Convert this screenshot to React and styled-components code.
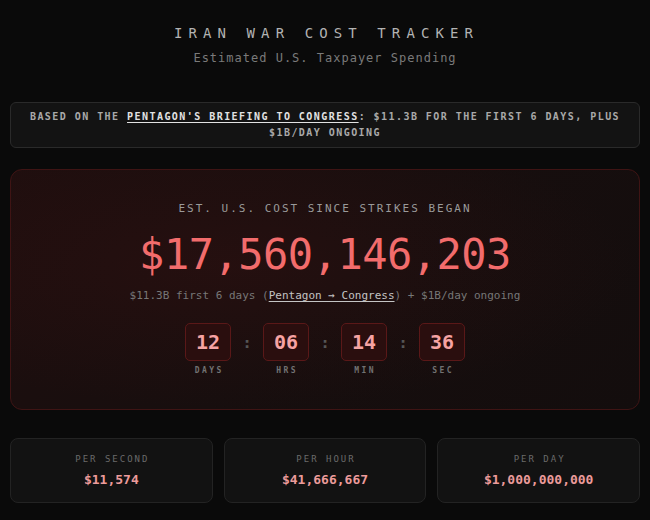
import React from 'react'
import styled, { createGlobalStyle } from 'styled-components'

const GlobalStyle = createGlobalStyle`
  html, body {
    margin: 0;
    padding: 0;
    background: #0a0a0a;
  }
  body {
    font-family: "DejaVu Sans Mono", "Liberation Mono", monospace;
    color: #bbb;
  }
  * { box-sizing: border-box; }
`

const Page = styled.div`
  padding: 24px 10px 18px;
`

const Header = styled.header`
  text-align: center;
  margin-bottom: 36px;
`

const Title = styled.h1`
  margin: 0;
  font-size: 14px;
  line-height: 18px;
  font-weight: normal;
  letter-spacing: 6.1px;
  padding-left: 3px;
  color: #b3b3b3;
`

const Subtitle = styled.p`
  margin: 8px 0 0;
  font-size: 12px;
  line-height: 16px;
  letter-spacing: 1px;
  color: #7a7a7a;
`

const Notice = styled.div`
  background: #131313;
  border: 1px solid #2a2a2a;
  border-radius: 6px;
  padding: 6px 10px;
  text-align: center;
  font-size: 10px;
  line-height: 16px;
  font-weight: bold;
  letter-spacing: 1.45px;
  color: #a9a9a9;
  text-transform: uppercase;
`

const Link = styled.a`
  color: ${p => (p.$bright ? '#e2e2e2' : '#c4c4c4')};
  text-decoration: underline;
  text-underline-offset: 2px;
`

const MainCard = styled.section`
  margin-top: 21px;
  border: 1px solid #3f1414;
  border-radius: 12px;
  background:
    radial-gradient(ellipse at 35% 40%, rgba(60, 18, 18, 0.35), transparent 70%),
    linear-gradient(135deg, #1e0e0e 0%, #170e0e 50%, #130d0d 100%);
  padding: 32px 20px 33px;
  text-align: center;
`

const CardLabel = styled.div`
  font-size: 11px;
  line-height: 14px;
  letter-spacing: 2px;
  color: #9a9a9a;
`

const BigNumber = styled.div`
  margin-top: 14px;
  font-size: 42px;
  line-height: 50px;
  letter-spacing: -0.5px;
  color: #f26c6c;
`

const Breakdown = styled.div`
  margin-top: 8px;
  font-size: 11px;
  line-height: 16px;
  color: #777;
`

const Countdown = styled.div`
  margin-top: 19px;
  display: flex;
  justify-content: center;
  align-items: flex-start;
`

const Unit = styled.div`
  display: flex;
  flex-direction: column;
  align-items: center;
`

const DigitBox = styled.div`
  width: 46px;
  height: 38px;
  display: flex;
  align-items: center;
  justify-content: center;
  background: #2a0e0e;
  border: 1px solid #5a1818;
  border-radius: 5px;
  font-size: 20px;
  font-weight: bold;
  color: #f6a3a3;
`

const UnitLabel = styled.div`
  margin-top: 5px;
  font-size: 8px;
  line-height: 10px;
  font-weight: bold;
  letter-spacing: 2.4px;
  padding-left: 2.4px;
  color: #727272;
`

const Colon = styled.div`
  width: 32px;
  height: 38px;
  display: flex;
  align-items: center;
  justify-content: center;
  font-size: 16px;
  font-weight: bold;
  color: #555;
`

const Stats = styled.div`
  margin-top: 28px;
  display: grid;
  grid-template-columns: repeat(3, 1fr);
  gap: 11px;
`

const StatCard = styled.div`
  background: #121212;
  border: 1px solid #232323;
  border-radius: 8px;
  padding: 14px 10px 13px;
  text-align: center;
`

const StatLabel = styled.div`
  font-size: 9px;
  line-height: 12px;
  letter-spacing: 2px;
  padding-left: 2px;
  color: #6a6a6a;
`

const StatValue = styled.div`
  margin-top: 6px;
  font-size: 13px;
  line-height: 18px;
  font-weight: bold;
  color: #ec9b9b;
`

const units = [
  { value: '12', label: 'DAYS' },
  { value: '06', label: 'HRS' },
  { value: '14', label: 'MIN' },
  { value: '36', label: 'SEC' },
]

const stats = [
  { label: 'PER SECOND', value: '$11,574' },
  { label: 'PER HOUR', value: '$41,666,667' },
  { label: 'PER DAY', value: '$1,000,000,000' },
]

export default function App() {
  return (
    <>
      <GlobalStyle />
      <Page>
        <Header>
          <Title>IRAN WAR COST TRACKER</Title>
          <Subtitle>Estimated U.S. Taxpayer Spending</Subtitle>
        </Header>

        <Notice>
          Based on the <Link $bright href="#">Pentagon's briefing to Congress</Link>: $11.3B for the first 6 days, plus $1B/day ongoing
        </Notice>

        <MainCard>
          <CardLabel>EST. U.S. COST SINCE STRIKES BEGAN</CardLabel>
          <BigNumber>$17,560,146,203</BigNumber>
          <Breakdown>
            $11.3B first 6 days (<Link href="#">Pentagon → Congress</Link>) + $1B/day ongoing
          </Breakdown>
          <Countdown>
            {units.map((u, i) => (
              <React.Fragment key={u.label}>
                {i > 0 && <Colon>:</Colon>}
                <Unit>
                  <DigitBox>{u.value}</DigitBox>
                  <UnitLabel>{u.label}</UnitLabel>
                </Unit>
              </React.Fragment>
            ))}
          </Countdown>
        </MainCard>

        <Stats>
          {stats.map(s => (
            <StatCard key={s.label}>
              <StatLabel>{s.label}</StatLabel>
              <StatValue>{s.value}</StatValue>
            </StatCard>
          ))}
        </Stats>
      </Page>
    </>
  )
}
